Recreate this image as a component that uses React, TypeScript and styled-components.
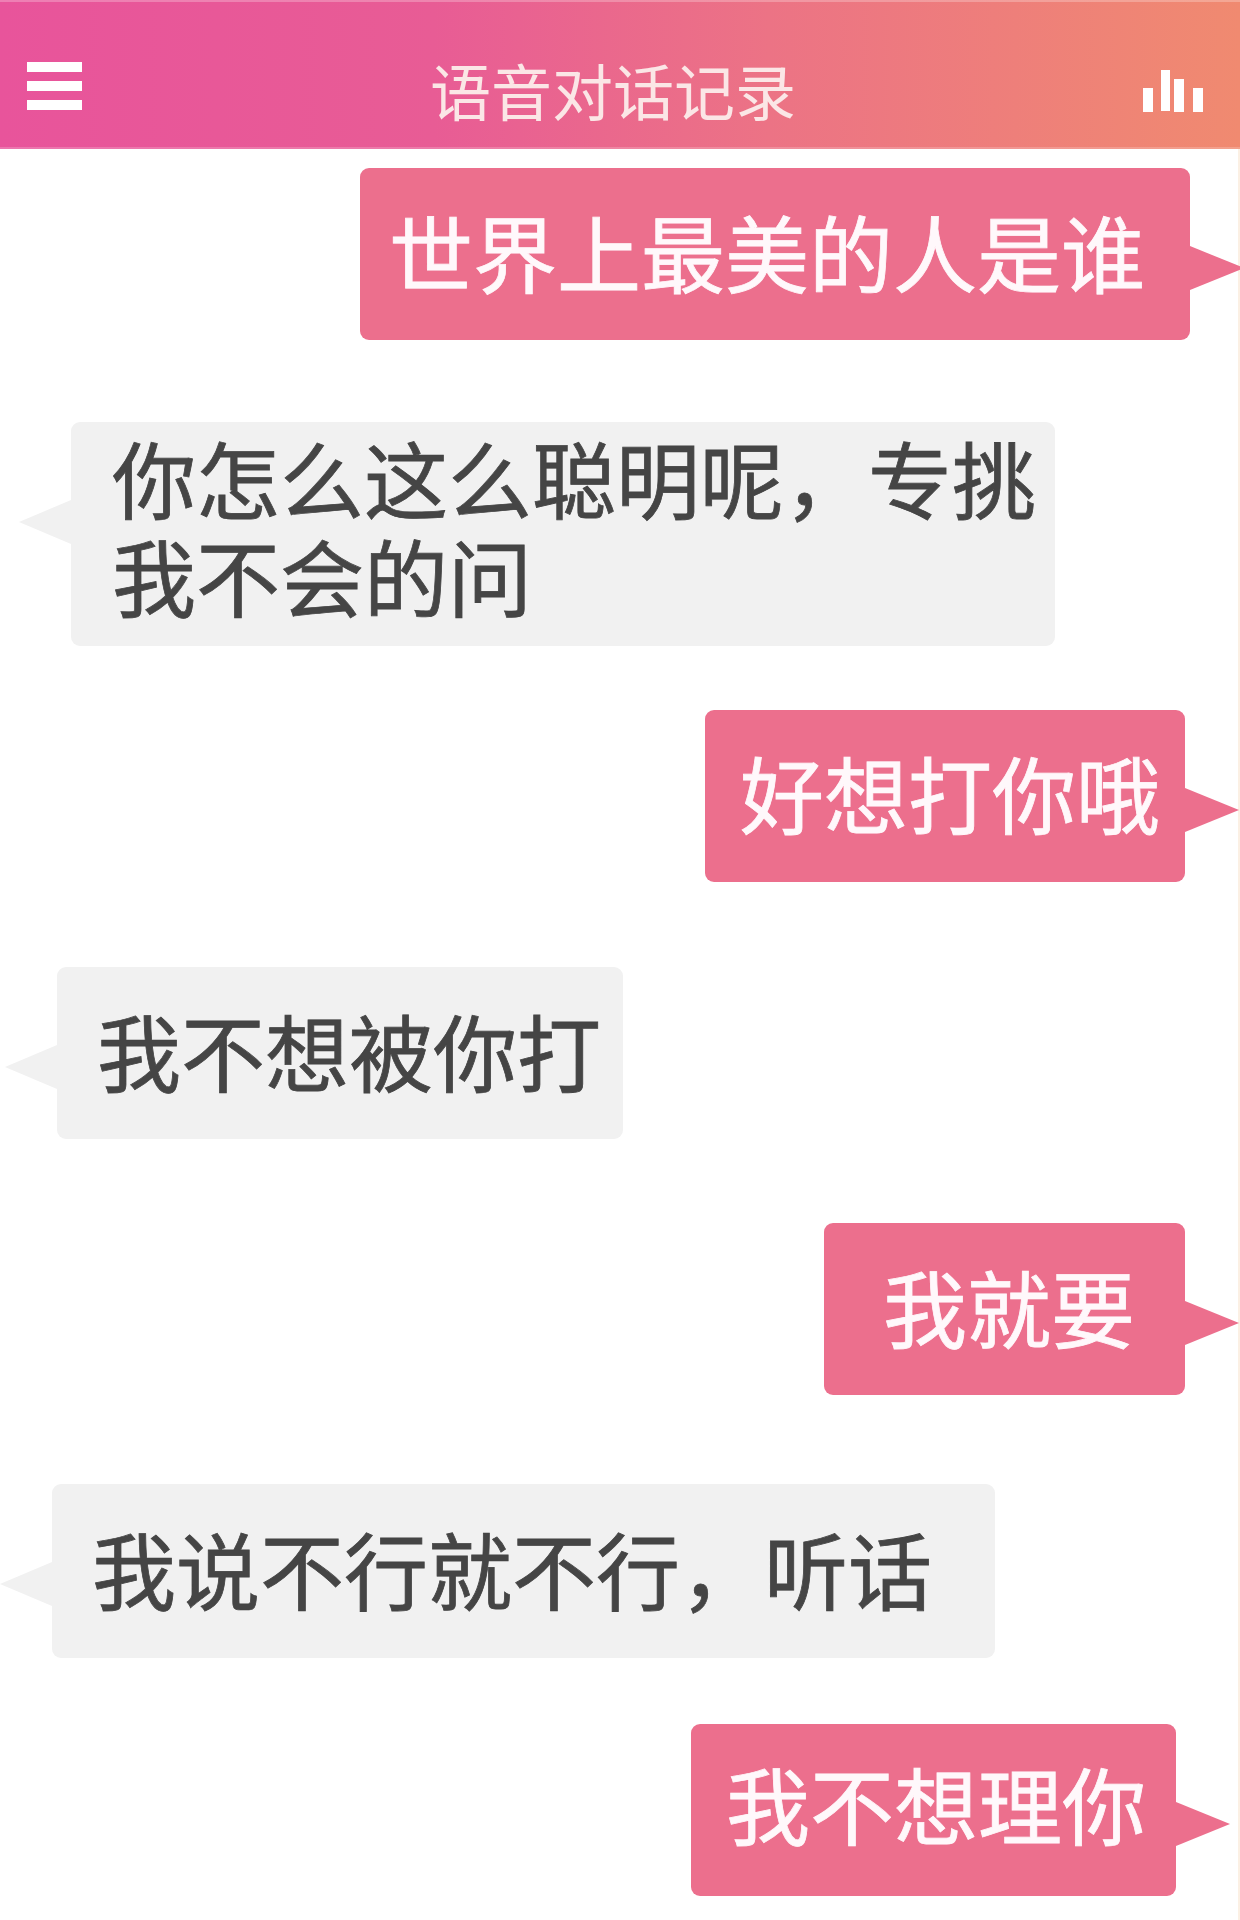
import React from "react";
import styled, { createGlobalStyle } from "styled-components";

const GlobalStyle = createGlobalStyle`
  html, body {
    margin: 0;
    padding: 0;
    background: #ffffff;
  }
  body {
    font-family: "Noto Sans CJK SC", "Liberation Sans", sans-serif;
  }
`;

interface Message {
  id: number;
  mine: boolean;
  lines: string[];
  top: number;
  inset: number;
  paddingLeft: number;
  paddingRight: number;
  paddingY: number;
  shift: number;
}

const messages: Message[] = [
  { id: 1, mine: true, lines: ["世界上最美的人是谁"], top: 19, inset: 50, paddingLeft: 29, paddingRight: 45, paddingY: 37, shift: 3 },
  { id: 2, mine: false, lines: ["你怎么这么聪明呢，专挑", "我不会的问"], top: 82, inset: 71, paddingLeft: 41, paddingRight: 19, paddingY: 14, shift: 8 },
  { id: 3, mine: true, lines: ["好想打你哦"], top: 64, inset: 55, paddingLeft: 35, paddingRight: 25, paddingY: 37, shift: 4 },
  { id: 4, mine: false, lines: ["我不想被你打"], top: 85, inset: 57, paddingLeft: 40, paddingRight: 22, paddingY: 37, shift: 3 },
  { id: 5, mine: true, lines: ["我就要"], top: 84, inset: 55, paddingLeft: 59, paddingRight: 50, paddingY: 37, shift: 3 },
  { id: 6, mine: false, lines: ["我说不行就不行，听话"], top: 89, inset: 52, paddingLeft: 40, paddingRight: 63, paddingY: 38, shift: 3 },
  { id: 7, mine: true, lines: ["我不想理你"], top: 66, inset: 64, paddingLeft: 35, paddingRight: 30, paddingY: 37, shift: 7 },
];

const App = () => (
  <Page>
    <GlobalStyle />
    <Header>
      <MenuButton aria-label="menu">
        <MenuBar />
        <MenuBar />
        <MenuBar />
      </MenuButton>
      <Title>语音对话记录</Title>
      <StatsIcon width="60" height="42" viewBox="0 0 60 42">
        <rect x="0" y="18" width="10" height="24" fill="#fff" />
        <rect x="18" y="0" width="9" height="41" fill="#fff" />
        <rect x="31" y="9" width="10" height="33" fill="#fff" />
        <rect x="50" y="18" width="10" height="24" fill="#fff" />
      </StatsIcon>
    </Header>
    <ChatList>
      {messages.map((m) => (
        <Row key={m.id} $mine={m.mine} $top={m.top} $inset={m.inset}>
          <Bubble
            $mine={m.mine}
            $left={m.paddingLeft}
            $right={m.paddingRight}
            $y={m.paddingY}
            $shift={m.shift}
          >
            {m.lines.map((line) => (
              <BubbleLine key={line}>{line}</BubbleLine>
            ))}
          </Bubble>
        </Row>
      ))}
    </ChatList>
  </Page>
);

const Page = styled.div`
  width: 1240px;
  height: 1920px;
  overflow: hidden;
  background: linear-gradient(90deg, #ffffff calc(100% - 2px), #fbf0e4 0);
`;

const Header = styled.header`
  height: 149px;
  display: grid;
  grid-template-columns: 1fr auto 1fr;
  align-items: center;
  padding: 22px 37px 0 27px;
  box-sizing: border-box;
  background: linear-gradient(90deg, #e8549b 0%, #e85c95 35%, #ec7385 62%, #f08a70 100%);
  box-shadow: inset 0 2px rgba(255, 255, 255, 0.25), inset 0 -2px rgba(255, 255, 255, 0.2);
`;

const MenuButton = styled.div`
  display: flex;
  flex-direction: column;
  gap: 9px;
  width: 55px;
`;

const MenuBar = styled.span`
  display: block;
  height: 10px;
  background: #ffffff;
`;

const Title = styled.h1`
  margin: 8px 0 0 -4px;
  font-size: 61px;
  line-height: 80px;
  font-weight: 400;
  color: #fbe6e6;
`;

const StatsIcon = styled.svg`
  justify-self: end;
  margin-top: 11px;
`;

const ChatList = styled.main`
  display: flex;
  flex-direction: column;
`;

const Row = styled.div<{ $mine: boolean; $top: number; $inset: number }>`
  display: flex;
  justify-content: ${({ $mine }) => ($mine ? "flex-end" : "flex-start")};
  margin-top: ${({ $top }) => $top}px;
  ${({ $mine, $inset }) =>
    $mine ? `padding-right: ${$inset}px;` : `padding-left: ${$inset}px;`}
`;

const Bubble = styled.div<{
  $mine: boolean;
  $left: number;
  $right: number;
  $y: number;
  $shift: number;
}>`
  position: relative;
  padding: ${({ $y, $left, $right, $shift }) =>
    `${$y - $shift}px ${$right}px ${$y + $shift}px ${$left}px`};
  border-radius: 9px;
  font-size: 84px;
  line-height: 98px;
  white-space: nowrap;
  -webkit-text-stroke: 0.8px currentColor;
  background: ${({ $mine }) => ($mine ? "#ec6f8d" : "#f1f1f1")};
  color: ${({ $mine }) => ($mine ? "#fff8fb" : "#454545")};

  &::after {
    content: "";
    position: absolute;
    top: 78px;
    width: ${({ $mine }) => ($mine ? 54 : 52)}px;
    height: 44px;
    background: inherit;
    ${({ $mine }) =>
      $mine
        ? `left: 100%; clip-path: polygon(0 0, 100% 50%, 0 100%);`
        : `right: 100%; clip-path: polygon(100% 0, 0 50%, 100% 100%);`}
  }
`;

const BubbleLine = styled.div``;

export default App;
